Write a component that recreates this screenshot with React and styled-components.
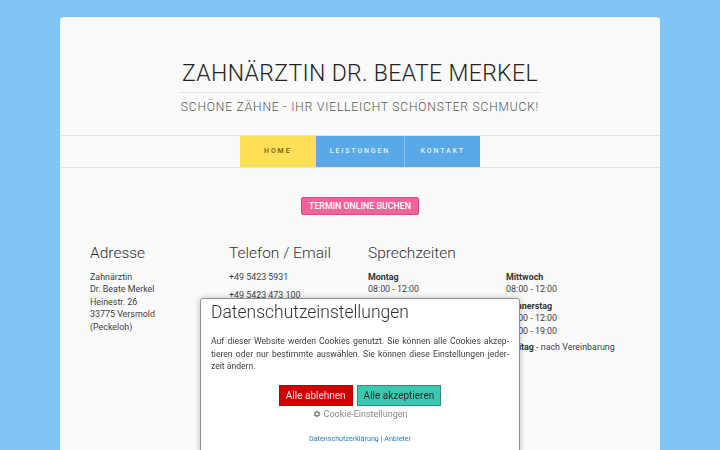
import React from "react";
import styled, { createGlobalStyle } from "styled-components";

const GlobalStyle = createGlobalStyle`
  html, body {
    margin: 0;
    padding: 0;
    height: 100%;
    overflow: hidden;
  }
  body {
    background: #80c5f7;
    font-family: Roboto, "Liberation Sans", sans-serif;
    color: #333;
  }
`;

const Page = styled.div`
  padding-top: 17px;
`;

const Card = styled.div`
  width: 600px;
  min-height: 520px;
  margin: 0 auto;
  background: #fafafa;
  border-radius: 4px;
`;

const Header = styled.header`
  padding-top: 43px;
  text-align: center;
`;

const Title = styled.h1`
  display: inline-block;
  margin: 0;
  padding: 0 2px 4px;
  border-bottom: 1px solid #e2e2e2;
  font-size: 23px;
  line-height: 1.2;
  font-weight: 300;
  letter-spacing: 0.35px;
  color: #222;
`;

const Subtitle = styled.h2`
  margin: 7px 0 0;
  font-size: 12px;
  line-height: 1.2;
  font-weight: 300;
  letter-spacing: 0.85px;
  color: #555;
`;

const Nav = styled.nav`
  margin-top: 21px;
  display: flex;
  justify-content: center;
  border-top: 1px solid #e3e3e3;
  border-bottom: 1px solid #e3e3e3;
`;

const NavItem = styled.a`
  display: flex;
  align-items: center;
  justify-content: center;
  height: 31px;
  min-width: 76px;
  padding: 0 14px;
  box-sizing: border-box;
  font-size: 7px;
  font-weight: 500;
  letter-spacing: 1.9px;
  text-transform: uppercase;
  background: ${p => (p.active ? "#fde058" : "#5aa9e6")};
  color: ${p => (p.active ? "#6a5c18" : "#e4f1fc")};
  border-left: ${p => (p.divider ? "1px solid #8cc3ee" : "none")};
`;

const Main = styled.main`
  padding: 29px 30px 0;
`;

const BookRow = styled.div`
  text-align: center;
`;

const BookButton = styled.a`
  display: inline-block;
  height: 18px;
  line-height: 16px;
  padding: 0 7px;
  background: #f0649a;
  border: 1px solid #d94d84;
  border-radius: 2px;
  color: #fff;
  font-size: 8.8px;
  font-weight: 500;
  box-sizing: border-box;
  vertical-align: top;
`;

const Columns = styled.div`
  margin-top: 28px;
  display: grid;
  grid-template-columns: 139px 139px 138px 139px;
`;

const Column = styled.div`
  grid-column: ${p => (p.wide ? "span 2" : "auto")};
`;

const ColTitle = styled.h3`
  margin: 0 0 8px;
  font-size: 15.5px;
  line-height: 1.2;
  font-weight: 300;
  color: #333;
`;

const Text = styled.p`
  margin: 0 0 ${p => p.gap || 0}px;
  font-size: 8.9px;
  line-height: 12.5px;
  color: #3e3e3e;
`;

const Day = styled.div`
  margin-bottom: 4px;
  font-size: 8.9px;
  line-height: 12.5px;
  color: #3e3e3e;
`;

const Strong = styled.b`
  font-weight: 700;
  color: #333;
`;

const HoursGrid = styled.div`
  display: grid;
  grid-template-columns: 138px 139px;
`;

const Modal = styled.div`
  position: fixed;
  left: 200px;
  top: 298px;
  width: 320px;
  height: 170px;
  box-sizing: border-box;
  padding: 3px 10px 0;
  background: #fff;
  border: 1px solid #8e8e8e;
  border-radius: 3px;
  box-shadow: 0 0 6px rgba(0, 0, 0, 0.25);
`;

const ModalTitle = styled.h4`
  margin: 0;
  font-size: 17.5px;
  line-height: 1.2;
  font-weight: 300;
  color: #333;
`;

const ModalText = styled.p`
  margin: 12px 0 0;
  font-size: 8.6px;
  line-height: 12.5px;
  text-align: justify;
  color: #3e3e3e;
`;

const Actions = styled.div`
  margin-top: 12px;
  display: flex;
  justify-content: center;
  gap: 4px;
`;

const Btn = styled.button`
  height: 21px;
  padding: 0 6px;
  font-family: Roboto, "Liberation Sans", sans-serif;
  font-size: 10px;
  border-radius: 0;
  border: 1px solid ${p => (p.accept ? "#2e8f80" : "#b80000")};
  background: ${p => (p.accept ? "#3cc7b0" : "#cc0000")};
  color: ${p => (p.accept ? "#1d2b28" : "#f6e6e6")};
`;

const Settings = styled.div`
  margin-top: 3px;
  display: flex;
  justify-content: center;
  align-items: center;
  gap: 3px;
  font-size: 9px;
  line-height: 1.2;
  color: #888;
`;

const Links = styled.div`
  margin-top: 16px;
  text-align: center;
  font-size: 7.2px;
  line-height: 1.2;
  color: #2c7dbf;
`;

const Gear = () => (
  <svg width="8" height="8" viewBox="0 0 24 24" fill="#888">
    <path d="M19.4 13c.04-.33.06-.66.06-1s-.02-.67-.06-1l2.1-1.65a.5.5 0 0 0 .12-.64l-2-3.46a.5.5 0 0 0-.6-.22l-2.5 1a7.3 7.3 0 0 0-1.7-1l-.38-2.65A.5.5 0 0 0 13.9 2h-4a.5.5 0 0 0-.5.42L9.03 5.07c-.6.25-1.18.58-1.7 1l-2.5-1a.5.5 0 0 0-.6.22l-2 3.46a.5.5 0 0 0 .12.64L4.45 11c-.04.33-.07.66-.07 1s.03.67.07 1l-2.1 1.65a.5.5 0 0 0-.12.64l2 3.46c.12.22.38.3.6.22l2.5-1c.52.4 1.1.74 1.7 1l.37 2.65c.05.24.26.42.5.42h4c.25 0 .46-.18.5-.42l.37-2.65c.6-.26 1.18-.6 1.7-1l2.5 1c.22.08.48 0 .6-.22l2-3.46a.5.5 0 0 0-.12-.64L19.4 13zM11.9 15.5a3.5 3.5 0 1 1 0-7 3.5 3.5 0 0 1 0 7z" />
  </svg>
);

export default function App() {
  return (
    <Page>
      <GlobalStyle />
      <Card>
        <Header>
          <Title>ZAHNÄRZTIN DR. BEATE MERKEL</Title>
          <Subtitle>SCHÖNE ZÄHNE - IHR VIELLEICHT SCHÖNSTER SCHMUCK!</Subtitle>
        </Header>
        <Nav>
          <NavItem active>Home</NavItem>
          <NavItem>Leistungen</NavItem>
          <NavItem divider>Kontakt</NavItem>
        </Nav>
        <Main>
          <BookRow>
            <BookButton>TERMIN ONLINE BUCHEN</BookButton>
          </BookRow>
          <Columns>
            <Column>
              <ColTitle>Adresse</ColTitle>
              <Text>
                Zahnärztin
                <br />
                Dr. Beate Merkel
                <br />
                Heinestr. 26
                <br />
                33775 Versmold
                <br />
                (Peckeloh)
              </Text>
            </Column>
            <Column>
              <ColTitle>Telefon / Email</ColTitle>
              <Text gap={5.5}>+49 5423 5931</Text>
              <Text gap={5.5}>+49 5423 473 100</Text>
              <Text>info@zahnaerztin-merkel.de</Text>
            </Column>
            <Column wide>
              <ColTitle>Sprechzeiten</ColTitle>
              <HoursGrid>
                <div>
                  <Day>
                    <Strong>Montag</Strong>
                    <br />
                    08:00 - 12:00
                  </Day>
                  <Day>
                    <Strong>Dienstag</Strong>
                    <br />
                    08:00 - 12:00
                    <br />
                    15:00 - 19:00
                  </Day>
                </div>
                <div>
                  <Day>
                    <Strong>Mittwoch</Strong>
                    <br />
                    08:00 - 12:00
                  </Day>
                  <Day>
                    <Strong>Donnerstag</Strong>
                    <br />
                    08:00 - 12:00
                    <br />
                    15:00 - 19:00
                  </Day>
                  <Day>
                    <Strong>Freitag</Strong> - nach Vereinbarung
                  </Day>
                </div>
              </HoursGrid>
            </Column>
          </Columns>
        </Main>
      </Card>
      <Modal>
        <ModalTitle>Datenschutzeinstellungen</ModalTitle>
        <ModalText>
          Auf dieser Website werden Cookies genutzt. Sie können alle Cookies akzep&shy;tieren oder nur
          bestimmte auswählen. Sie können diese Einstellungen jeder&shy;zeit ändern.
        </ModalText>
        <Actions>
          <Btn>Alle ablehnen</Btn>
          <Btn accept>Alle akzeptieren</Btn>
        </Actions>
        <Settings>
          <Gear />
          Cookie-Einstellungen
        </Settings>
        <Links>Datenschutzerklärung | Anbieter</Links>
      </Modal>
    </Page>
  );
}
